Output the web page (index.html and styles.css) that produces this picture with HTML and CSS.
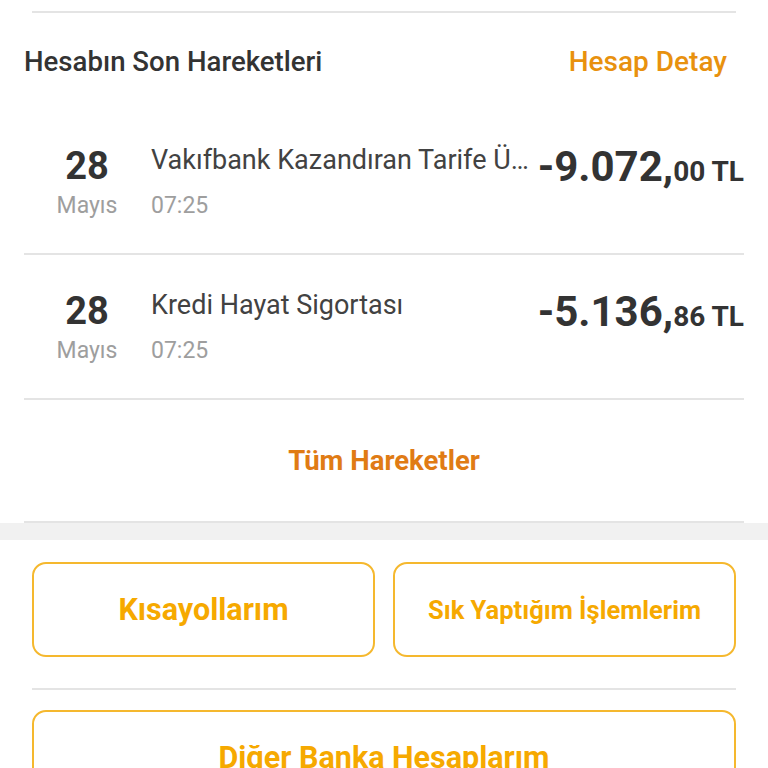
FILE: index.html
```html
<!DOCTYPE html>
<html lang="tr">
<head>
  <meta charset="UTF-8">
  <meta name="viewport" content="width=device-width, initial-scale=1.0">
  <title>Hesabım</title>
  <link rel="stylesheet" href="styles.css">
</head>
<body>
  <div class="card">
    <div class="rule rule-top"></div>

    <div class="card-head">
      <div class="card-title">Hesabın Son Hareketleri</div>
      <a class="head-link" href="#">Hesap Detay</a>
    </div>

    <!-- son hareketler -->
    <div class="tx-row">
      <div class="tx-date">
        <div class="tx-day">28</div>
        <div class="tx-month">Mayıs</div>
      </div>
      <div class="tx-info">
        <div class="tx-name">Vakıfbank Kazandıran Tarife Ürün Bedeli</div>
        <div class="tx-time">07:25</div>
      </div>
      <div class="tx-amount">-9.072,<span class="tx-cents">00 TL</span></div>
    </div>

    <div class="tx-row">
      <div class="tx-date">
        <div class="tx-day">28</div>
        <div class="tx-month">Mayıs</div>
      </div>
      <div class="tx-info">
        <div class="tx-name">Kredi Hayat Sigortası</div>
        <div class="tx-time">07:25</div>
      </div>
      <div class="tx-amount">-5.136,<span class="tx-cents">86 TL</span></div>
    </div>

    <div class="all-tx">
      <a href="#">Tüm Hareketler</a>
    </div>
  </div>

  <div class="band"></div>

  <div class="actions">
    <div class="btn-grid">
      <a class="btn btn-big" href="#">Kısayollarım</a>
      <a class="btn" href="#">Sık Yaptığım İşlemlerim</a>
    </div>
    <div class="rule"></div>
    <a class="btn btn-big btn-wide" href="#">Diğer Banka Hesaplarım</a>
  </div>
</body>
</html>
```

FILE: styles.css
```css
body {
  margin: 0;
  background-color: #ffffff;
  color: #333333;
  font-family: Roboto, "Noto Sans", sans-serif;
  overflow: hidden;
}

a {
  text-decoration: none;
}

.rule {
  height: 2px;
  background-color: #e4e4e4;
}

.card {
  padding: 0 24px;
}

.rule-top {
  margin: 11px 8px 0;
}

.card-head {
  display: flex;
  align-items: center;
  justify-content: space-between;
  height: 97px;
  padding-right: 17px;
}

.card-title {
  font-size: 27.6px;
  font-weight: 500;
  color: #333333;
}

.head-link {
  font-size: 28px;
  font-weight: 500;
  color: #e8910e;
}

.tx-row {
  display: flex;
  align-items: flex-start;
  height: 143px;
  border-bottom: 2px solid #e4e4e4;
}

.tx-date {
  width: 78px;
  margin-left: 24px;
  padding-top: 36px;
  text-align: center;
}

.tx-day {
  font-size: 38px;
  line-height: 40px;
  font-weight: 700;
  color: #333333;
}

.tx-month {
  margin-top: 6px;
  font-size: 23px;
  line-height: 28px;
  color: #9e9e9e;
}

.tx-info {
  flex: 1;
  min-width: 0;
  margin-left: 25px;
  padding-top: 34px;
}

.tx-name {
  font-size: 27px;
  line-height: 32px;
  color: #424242;
  white-space: nowrap;
  overflow: hidden;
  text-overflow: ellipsis;
}

.tx-time {
  margin-top: 16px;
  font-size: 23px;
  line-height: 28px;
  color: #9e9e9e;
}

.tx-amount {
  padding-top: 37px;
  margin-left: 6px;
  font-size: 42px;
  line-height: 40px;
  font-weight: 700;
  color: #333333;
  white-space: nowrap;
}

.tx-cents {
  font-size: 28px;
}

.all-tx {
  display: flex;
  align-items: center;
  justify-content: center;
  height: 121px;
  border-bottom: 2px solid #e4e4e4;
}

.all-tx a {
  font-size: 27.5px;
  font-weight: 700;
  color: #e07b14;
}

.band {
  height: 17px;
  background-color: #f1f1f1;
}

.actions {
  padding: 22px 32px 0;
}

.btn-grid {
  display: grid;
  grid-template-columns: 1fr 1fr;
  gap: 18px;
  margin-bottom: 31px;
}

.btn {
  display: flex;
  align-items: center;
  justify-content: center;
  height: 95px;
  box-sizing: border-box;
  border: 2px solid #f5b82e;
  border-radius: 14px;
  font-size: 25.5px;
  font-weight: 700;
  color: #f6a900;
}

.btn-big {
  font-size: 30.5px;
}

.btn-wide {
  margin-top: 20px;
}
```
